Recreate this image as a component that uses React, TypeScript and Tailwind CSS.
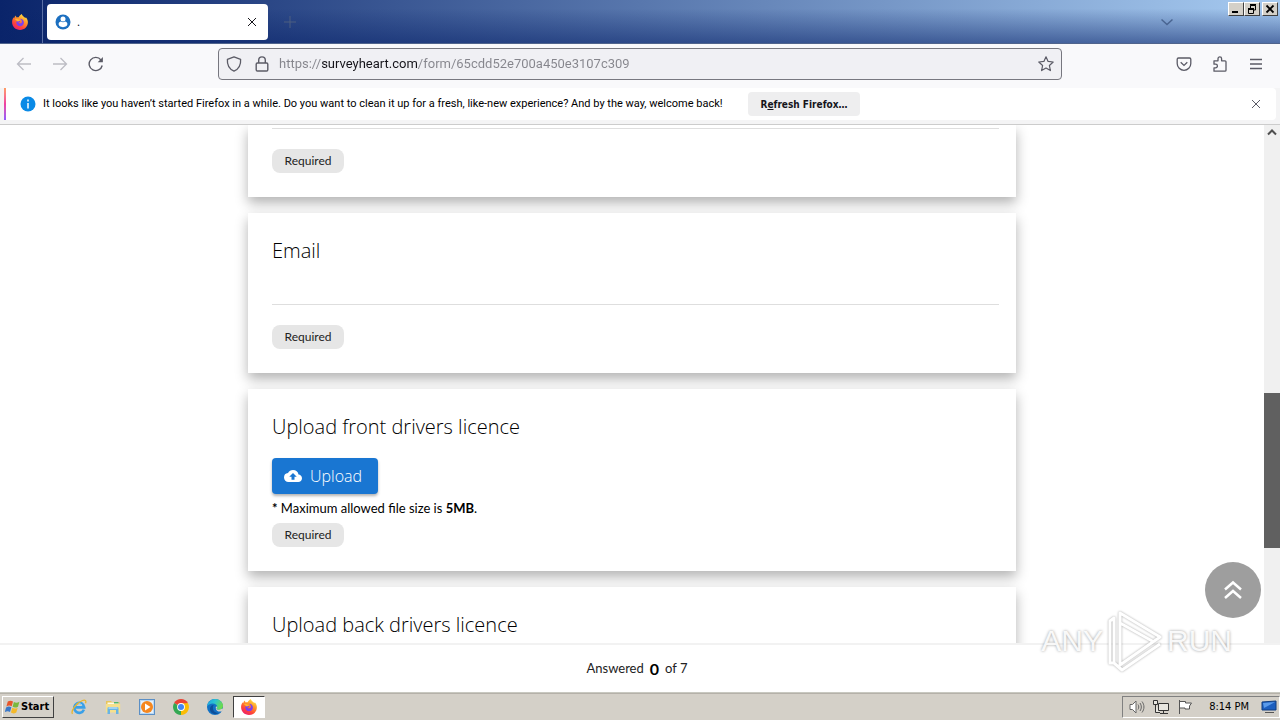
import React, { useState } from "react";
import { MdBackup } from "react-icons/md";

interface IconProps {
  className?: string;
}

function FirefoxLogo({ className }: IconProps) {
  return (
    <svg className={className} viewBox="0 0 16 16">
      <defs>
        <linearGradient id="fx-body" x1="0.8" y1="0" x2="0.2" y2="1">
          <stop offset="0" stopColor="#fff04a" />
          <stop offset="0.35" stopColor="#ff9a2a" />
          <stop offset="0.7" stopColor="#ff4338" />
          <stop offset="1" stopColor="#e8197a" />
        </linearGradient>
      </defs>
      <path
        d="M9.800 0c.3 1.600 1.400 2.300 2.600 3.200C13.300 3.800 13.700 4 14 3.400c1.200 1.400 1.900 3 1.900 4.900C15.900 12.600 12.500 16 8 16S.1 12.600.1 8.300c0-2 .6-3.700 1.600-5l.3 1.200C2.300 3.200 3 2.200 3.900 1.500c0 .8.2 1.500.8 2 .5-.2 1.200-.3 2-.2C7.300 2 8.300.7 9.800 0z"
        fill="url(#fx-body)"
      />
      <path
        d="M8 4.800c2.300 0 3.900 1.700 3.900 3.800S10.300 12.300 8.100 12.300 4.300 10.600 4.300 8.700c0-1 .4-1.700.9-2.200l2.600.2c.8.1.6.9-.1 1.200l-1.200.6c.3 1.200 2.800 1.300 3.300-.2.400-1.400-.6-2.800-1.800-3.500z"
        fill="#7b3ff0"
      />
      <path d="M3 5.200c1.200-.6 2.500-.4 3.400.3l1.700.5c0 1-1.500 1.200-2.100 1.700z" fill="#ffb52e" />
    </svg>
  );
}

function ChromeLogo({ className }: IconProps) {
  return (
    <svg className={className} viewBox="0 0 16 16">
      <path d="M8 8 1.100 4A8 8 0 0 1 14.900 4z" fill="#ea4335" />
      <path d="M8 8 14.900 4A8 8 0 0 1 8 16z" fill="#fbbc05" />
      <path d="M8 8 8 16A8 8 0 0 1 1.100 4z" fill="#34a853" />
      <path d="M8 4.200h6.900L11.400 10z" fill="#fbbc05" />
      <circle cx="8" cy="8" r="3.900" fill="#fff" />
      <circle cx="8" cy="8" r="3" fill="#4285f4" />
    </svg>
  );
}

function EdgeLogo({ className }: IconProps) {
  return (
    <svg className={className} viewBox="0 0 16 16">
      <defs>
        <linearGradient id="edge-top" x1="0" y1="0" x2="1" y2="0.4">
          <stop offset="0" stopColor="#1ba0e2" />
          <stop offset="0.5" stopColor="#2bc3d2" />
          <stop offset="1" stopColor="#6bdb50" />
        </linearGradient>
      </defs>
      <circle cx="8" cy="8" r="8" fill="#1271c4" />
      <path
        d="M.1 7.500C.5 3.200 3.900 0 8 0c4.800 0 8 3.400 8 6.900 0 2.300-1.700 3.800-3.900 3.800-1.700 0-2.500-.6-2.500-1 0-.4.6-.6.6-1.900C10.200 6 8.300 4.400 5.700 4.400 3.100 4.400 1 5.700.1 7.500z"
        fill="url(#edge-top)"
      />
      <path
        d="M9 7.400c-1 3.300 1.200 5.200 4 5.200 1 0 1.800-.3 2.400-.7l1-2.500-4.300 1.300c-1.700 0-2.500-.6-2.500-1 0-.4.6-.6.6-1.900z"
        fill="#d4d0c8"
      />
      <path d="M3 9.500c.3-2.400 2-3.800 3.700-3.500C4.900 8.500 6 14 11.500 14c-2 1.800-8.800 1.500-8.500-4.500z" fill="#0d4f9a" />
    </svg>
  );
}

function ExplorerLogo({ className }: IconProps) {
  return (
    <svg className={className} viewBox="0 0 16 16" fill="none">
      <path d="M12.900 10.600A5 5 0 1 1 13.200 8.400H4" stroke="#3aa0e8" strokeWidth="2.600" />
      <path d="M4.300 7.200A4 4 0 0 1 11 6" stroke="#9bdcff" />
      <path d="M1.500 14.800C-.5 12 5 4 11.500 1.500c3-1 4 .5 3 2.700" stroke="#e9b52c" strokeWidth="1.300" />
    </svg>
  );
}

function FolderLogo({ className }: IconProps) {
  return (
    <svg className={className} viewBox="0 0 16 16">
      <path d="M1 3.500V2h5l1 1h7.500v5H1z" fill="#e8c55c" />
      <path d="M2.500 3.500h11V8h-11z" fill="#fffbe6" />
      <path d="M9 3h4.500v1.500H9z" fill="#52b66b" />
      <path d="M.8 5h14.400v8.500H.8z" fill="#f6e08c" />
      <path d="M2.500 15V9.500c0-1 .5-1.500 1.500-1.500h8c1 0 1.500.5 1.500 1.500V15H11v-4H5v4z" fill="#69b4e4" />
      <path d="M3.500 9h9" stroke="#d6f1ff" />
    </svg>
  );
}

function MediaLogo({ className }: IconProps) {
  return (
    <svg className={className} viewBox="0 0 16 16">
      <rect x="0.5" y="0.5" width="15" height="15" fill="#b9d8f4" stroke="#5b8fc5" />
      <rect x="2" y="2" width="12" height="12" fill="#e6f1fb" />
      <circle cx="8" cy="8" r="6" fill="#f5871f" />
      <path d="M6 4.500 11.500 8 6 11.500z" fill="#fff" />
    </svg>
  );
}

function WindowsLogo({ className }: IconProps) {
  return (
    <svg className={className} viewBox="0 0 16 16">
      <path d="M2.800 2.600C4.700 1.400 6.500 1.500 8 2.600L6.700 7.300C5 6.200 3.300 6.200 1.400 7.400z" fill="#e8562a" />
      <path d="M8.900 3c1.600 1 3.400 1.100 5.500-.2L13 7.700c-2 1.200-3.800 1.100-5.400.1z" fill="#7ab83c" />
      <path d="M1.100 8.400c2-1.200 3.700-1.100 5.300-.1L5 13c-1.600-1.100-3.400-1-5.300.2z" fill="#3a78c8" />
      <path d="M7.300 8.800c1.700 1 3.400 1.100 5.400-.1l-1.400 4.800c-2 1.200-3.700 1.200-5.400.1z" fill="#f4b92a" />
    </svg>
  );
}

const TASKS = [
  { name: "Internet Explorer", Logo: ExplorerLogo },
  { name: "Windows Explorer", Logo: FolderLogo },
  { name: "Media Player", Logo: MediaLogo },
  { name: "Google Chrome", Logo: ChromeLogo },
  { name: "Microsoft Edge", Logo: EdgeLogo },
];

function WindowButton({ label, children }: { label: string; children: React.ReactNode }) {
  return (
    <button
      aria-label={label}
      className="h-3.5 w-4 border border-t-white border-r-[#404040] border-b-[#404040] border-l-white bg-[#d4d0c8]"
    >
      <svg className="h-3 w-3.5" viewBox="0 0 14 12" fill="none" stroke="#000">
        {children}
      </svg>
    </button>
  );
}

function TitleBar() {
  return (
    <header className="flex h-11 shrink-0 border-b border-[#50648c] bg-[linear-gradient(to_bottom,transparent_0%,transparent_20%,rgba(10,36,106,0.55)_100%),linear-gradient(to_right,#0a246a,#a6caf0)]">
      <div className="flex w-[43px] shrink-0 items-center justify-center border-r border-[#5a6fa5] pr-0.5">
        <FirefoxLogo className="size-4" />
      </div>
      <div className="mt-1 mb-[3px] ml-1 flex w-[221px] items-center rounded bg-white px-2">
        <svg className="size-4" viewBox="0 0 16 16">
          <circle cx="8" cy="8" r="7.500" fill="#1c6fc0" />
          <circle cx="8" cy="5" r="2.500" fill="#fff" />
          <path
            d="M8 13.200c-2.700 0-4.400-1.400-4.400-3.100C3.600 8.600 4.800 7.800 6 7.600c1.100.9 2.900.9 4 0 1.200.2 2.400 1 2.400 2.500 0 1.700-1.700 3.100-4.400 3.100z"
            fill="#fff"
          />
        </svg>
        <span className="ml-1.5 flex-1 text-xs">.</span>
        <button aria-label="Close tab" className="flex size-4 items-center justify-center">
          <svg className="size-2.5" viewBox="0 0 10 10" stroke="#15141a">
            <path d="M1 1l8 8M9 1 1 9" />
          </svg>
        </button>
      </div>
      <button aria-label="New tab" className="ml-3 flex w-5 items-center justify-center">
        <svg className="size-3" viewBox="0 0 12 12" stroke="#4d5f80">
          <path d="M6 0v12M0 6h12" />
        </svg>
      </button>
      <div className="flex-1" />
      <button aria-label="List all tabs" className="mr-[51px] flex w-5 items-center justify-center">
        <svg className="size-3" viewBox="0 0 12 12" fill="none" stroke="#4a6591" strokeWidth="1.500">
          <path d="M0.500 3.500l5.500 5 5.500-5" />
        </svg>
      </button>
      <div className="mt-0.5 mr-0.5 flex h-3.5">
        <WindowButton label="Minimize">
          <path d="M3 9h6" strokeWidth="2" />
        </WindowButton>
        <WindowButton label="Restore">
          <path d="M5.500 5V2.500h5v4.500H9M5 2h6M3.500 6v4.500h5V6M3 5.500h6M5 1.500h6M3 6.500h6" />
        </WindowButton>
        <span className="w-0.5" />
        <WindowButton label="Close">
          <path d="M3.500 2.500l7 7M10.500 2.500l-7 7" strokeWidth="1.800" />
        </WindowButton>
      </div>
    </header>
  );
}

function NavBar() {
  return (
    <nav className="flex h-11 shrink-0 items-center bg-[#f9f9fb] pb-1 text-[#5b5b66]">
      <div className="flex w-[218px] items-center gap-5 pl-4">
        <button aria-label="Back" className="text-[#bdbdc4]">
          <svg className="size-4" viewBox="0 0 16 16" fill="none" stroke="currentColor" strokeWidth="1.300">
            <path d="M15 8H1.500M7.500 2l-6 6 6 6" />
          </svg>
        </button>
        <button aria-label="Forward" className="text-[#bdbdc4]">
          <svg className="size-4" viewBox="0 0 16 16" fill="none" stroke="currentColor" strokeWidth="1.300">
            <path d="M1 8h13.500M8.500 2l6 6-6 6" />
          </svg>
        </button>
        <button aria-label="Reload">
          <svg className="size-4" viewBox="0 0 16 16" fill="none" stroke="currentColor" strokeWidth="1.400">
            <path d="M14.200 9.500A6.600 6.600 0 1 1 13 4" />
            <path d="M14.900 1v5.200H9.700z" fill="currentColor" stroke="none" />
          </svg>
        </button>
      </div>
      <div className="flex h-8 flex-1 items-center rounded border border-[#77777f] bg-[#f0f0f4] px-[7px]">
        <svg className="size-4" viewBox="0 0 16 16" fill="none" stroke="currentColor" strokeWidth="1.300">
          <path d="M8 .8 14.600 3.400c.4 5-1.700 9.600-6.600 11.800C3.100 13 1 8.400 1.400 3.400z" strokeLinejoin="round" />
        </svg>
        <svg className="ml-3 size-4" viewBox="0 0 16 16" fill="none" stroke="currentColor" strokeWidth="1.400">
          <rect x="2.200" y="7" width="11.600" height="8" rx="1.200" />
          <path d="M4.700 7V4.200a3.300 3.300 0 0 1 6.600 0V7" />
        </svg>
        {/* the domain part is darker than the rest of the address */}
        <input
          aria-label="Address"
          defaultValue="https://surveyheart.com/form/65cdd52e700a450e3107c309"
          className="ml-[9px] min-w-0 flex-1 bg-[linear-gradient(to_right,#85858c_43px,#15141a_43px,#15141a_139px,#85858c_139px)] bg-clip-text text-[13px] text-transparent outline-none"
        />
        <button aria-label="Bookmark this page">
          <svg className="size-4" viewBox="0 0 16 16" fill="none" stroke="currentColor" strokeWidth="1.200" strokeLinejoin="round">
            <path d="M8 .8l2.100 4.600 5.100.6-3.800 3.500 1 5.100L8 12l-4.400 2.600 1-5.100L.8 6l5.100-.6z" />
          </svg>
        </button>
      </div>
      <div className="flex w-[218px] items-center justify-end gap-5 pr-4">
        <button aria-label="Save to Pocket">
          <svg className="size-4" viewBox="0 0 16 16" fill="none" stroke="currentColor" strokeWidth="1.300">
            <path d="M2.500 2h11c.8 0 1.300.5 1.300 1.300v4.200a6.800 6.800 0 0 1-13.600 0V3.300C1.200 2.500 1.700 2 2.500 2z" />
            <path d="M4.700 6.300 8 9.400l3.300-3.100" />
          </svg>
        </button>
        <button aria-label="Extensions">
          <svg className="size-4" viewBox="0 0 16 16" fill="none" stroke="currentColor" strokeWidth="1.300" strokeLinejoin="round">
            <path d="M2 15.200v-3.400h1.600a1.800 1.800 0 0 0 0-3.600H2V4.800h4V2.700a1.800 1.800 0 0 1 3.600 0v2.100H13c.6 0 1 .4 1 1v8.400c0 .6-.4 1-1 1z" />
          </svg>
        </button>
        <button aria-label="Open application menu">
          <svg className="size-4" viewBox="0 0 16 16" stroke="currentColor" strokeWidth="1.300">
            <path d="M2 3.500h12M2 8h12M2 12.500h12" />
          </svg>
        </button>
      </div>
    </nav>
  );
}

function Notice() {
  return (
    <div className="shrink-0 border-b border-[#cccccc] bg-[#f4f4f5] px-1 pb-1 text-[11px]">
      <div className="flex h-8 items-center rounded-r bg-white pr-3">
        <span className="h-full w-0.5 bg-linear-to-b from-[#ff9c63] via-[#f03fa0] to-[#9059ff]" />
        <svg className="ml-3.5 size-4" viewBox="0 0 16 16">
          <circle cx="8" cy="8" r="7.500" fill="#0a8ae6" />
          <path d="M8 3.500v2M8 7v5.500" stroke="#fff" strokeWidth="1.500" />
        </svg>
        <p className="ml-[7px] w-[685px] whitespace-nowrap text-black">
          It looks like you haven’t started Firefox in a while. Do you want to clean it up for a fresh, like-new
          experience? And by the way, welcome back!
        </p>
        <button className="ml-5 h-6 w-28 rounded bg-[#eeeeef] font-['DejaVu_Sans_Condensed','DejaVu_Sans',sans-serif] text-[10px] font-bold">
          R<u>e</u>fresh Firefox…
        </button>
        <div className="flex-1" />
        <button aria-label="Close notification" className="flex size-4 items-center justify-center">
          <svg className="size-2.5" viewBox="0 0 10 10" stroke="#5b5b66">
            <path d="M1 1l8 8M9 1 1 9" />
          </svg>
        </button>
      </div>
    </div>
  );
}

function Card({ children }: { children: React.ReactNode }) {
  return (
    <section className="bg-white pr-[17px] pl-6 shadow-[0_6px_12px_rgba(0,0,0,0.3)]">
      {children}
    </section>
  );
}

function Required() {
  return (
    <span className="flex h-6 w-[72px] items-center justify-center rounded-lg bg-[#e6e6e6] text-xs text-[#222]">
      Required
    </span>
  );
}

function Question({ children }: { children: React.ReactNode }) {
  return (
    <span className="block font-['Open_Sans',sans-serif] text-xl leading-7 font-light text-black">
      {children}
    </span>
  );
}

function SurveyForm() {
  const [email, setEmail] = useState("");

  return (
    <main className="mx-auto flex w-full max-w-3xl flex-col gap-4 font-['Lato',sans-serif]">
      <Card>
        <div className="mb-5 h-1 border-b border-[#dedede]" />
        <Required />
        <div className="h-6" />
      </Card>
      <Card>
        <div className="py-6">
          <label htmlFor="email">
            <Question>Email</Question>
          </label>
          <input
            id="email"
            type="email"
            value={email}
            onChange={(e) => setEmail(e.target.value)}
            className="mt-2 mb-5 block h-8 w-full border-b border-[#dedede] outline-none"
          />
          <Required />
        </div>
      </Card>
      <Card>
        <div className="py-6">
          <Question>Upload front drivers licence</Question>
          <button className="mt-[17px] flex h-9 w-[106px] items-center gap-2 rounded bg-[#1976d2] pl-3 font-['Open_Sans',sans-serif] text-base font-light text-white shadow-[0_2px_3px_rgba(0,0,0,0.3)]">
            <MdBackup className="size-[18px]" />
            Upload
          </button>
          <p className="my-1 text-[13px] leading-[21px] text-black">
            <b>*</b> Maximum allowed file size is <b>5MB</b>.
          </p>
          <Required />
        </div>
      </Card>
      <Card>
        <div className="pt-6 pb-12">
          <Question>Upload back drivers licence</Question>
        </div>
      </Card>
    </main>
  );
}

function ScrollBar() {
  return (
    <div className="flex w-4 shrink-0 flex-col bg-[#f0f0f0]">
      <svg className="size-4" viewBox="0 0 16 16" fill="none" stroke="#505050" strokeWidth="2">
        <path d="M4 9.500 8 5.500l4 4" />
      </svg>
      <div className="grow-[252]" />
      <div className="grow-[155] bg-[#606060]" />
      <div className="grow-[95]" />
    </div>
  );
}

function Watermark() {
  return (
    <div className="pointer-events-none absolute right-12 bottom-5 flex items-center gap-1 font-['Liberation_Sans',sans-serif] text-[30px] leading-none text-white/90 [text-shadow:0_0_3px_rgba(0,0,0,0.4)]">
      <span>ANY</span>
      <svg
        className="h-16 w-14 drop-shadow-[0_0_1px_rgba(0,0,0,0.35)]"
        viewBox="0 0 56 64"
        fill="none"
        stroke="#fff"
        strokeWidth="3"
        strokeLinejoin="round"
      >
        <path d="M7 54V9l-4 3v42zM13 4l40 24-40 28V4zM13 14l34 19M7 54l8 7 38-26" />
      </svg>
      <span>RUN</span>
    </div>
  );
}

function TaskBar() {
  return (
    <footer className="flex h-[27px] shrink-0 items-center border-t border-[#b5b1a9] bg-[#d4d0c8] font-['DejaVu_Sans_Condensed','DejaVu_Sans',sans-serif] text-[11px] text-black">
      <button className="ml-0.5 flex h-[22px] w-[52px] items-center border border-t-white border-r-[#404040] border-b-[#404040] border-l-white pl-0.5 font-bold">
        <WindowsLogo className="size-4" />
        Start
      </button>
      <div className="ml-[17px] flex gap-[18px]">
        {TASKS.map(({ name, Logo }) => (
          <button key={name} aria-label={name}>
            <Logo className="size-4" />
          </button>
        ))}
      </div>
      <button
        aria-label="Firefox"
        className="ml-2.5 flex h-[22px] w-8 items-center justify-center border border-t-[#404040] border-r-white border-b-white border-l-[#404040] bg-white"
      >
        <FirefoxLogo className="size-4" />
      </button>
      <div className="flex-1" />
      <div className="flex h-[22px] items-center border border-t-[#808080] border-r-white border-b-white border-l-[#808080] pl-1.5">
        <svg className="size-4" viewBox="0 0 16 16" fill="none" stroke="#666">
          <path d="M1 5.500h2.500L7 2v12l-3.500-3.500H1z" fill="#fff" />
          <path d="M9 5.500c1 1.500 1 3.500 0 5M11 4c1.800 2.500 1.800 5.500 0 8M13 2.500c2.600 3.500 2.600 7.500 0 11" />
        </svg>
        <svg className="ml-2 size-4" viewBox="0 0 16 16" fill="#e8e6e0" stroke="#333">
          <path d="M5.500 4.500h10v7h-10zM7 14.500h8M10.500 11.500v3M.5 1.500h4v4h-4zM2.500 5.500v8H7" />
        </svg>
        <svg className="ml-2 size-4" viewBox="0 0 16 16" fill="#fff" stroke="#555">
          <path d="M2.500 1v14M2.500 2.500h6V4h6l-2 3v3H8V9H2.500z" />
        </svg>
        <time className="ml-4">8:14 PM</time>
        <svg className="mr-0.5 ml-3 size-4" viewBox="0 0 16 16">
          <path d="M1 3l14-1v9H1z" fill="#1d5fbf" stroke="#123f80" />
          <path d="M2 4l12-1L3 9z" fill="#5b9bea" />
          <path d="M4 13.500h9" stroke="#555" />
        </svg>
      </div>
    </footer>
  );
}

export default function App() {
  return (
    <div className="flex h-screen flex-col overflow-hidden bg-white font-['Roboto',sans-serif] text-[#15141a]">
      <TitleBar />
      <NavBar />
      <Notice />
      <div className="relative flex min-h-0 flex-1 flex-col">
        <div className="flex min-h-0 flex-1">
          <div className="min-w-0 flex-1 overflow-hidden">
            <SurveyForm />
          </div>
          <ScrollBar />
        </div>
        <div className="flex h-[50px] shrink-0 items-center justify-center gap-1.5 border-t-2 border-b border-t-[#f2f2f2] border-b-[#c8c8c0] pr-1.5 font-['Lato',sans-serif] text-[13px] text-[#222]">
          Answered <b className="text-base text-black">0</b> of 7
        </div>
        <button
          aria-label="Back to top"
          className="absolute right-[19px] bottom-[75px] flex size-14 items-center justify-center rounded-full bg-[#9e9e9e]"
        >
          <svg className="size-6" viewBox="0 0 24 24" fill="none" stroke="#fff" strokeWidth="2.500">
            <path d="M4 11.500l8-7 8 7M4 20l8-7 8 7" />
          </svg>
        </button>
        <Watermark />
      </div>
      <TaskBar />
    </div>
  );
}
